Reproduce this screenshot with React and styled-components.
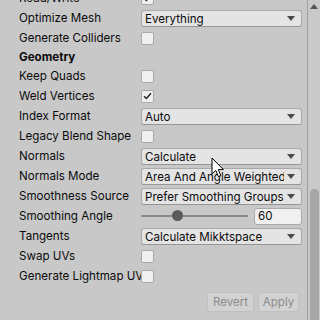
import React from "react";
import styled, { createGlobalStyle } from "styled-components";

const Global = createGlobalStyle`
  html, body { margin: 0; padding: 0; background: #c8c8c8; }
  body { width: 320px; height: 320px; overflow: hidden; font-family: Inter, "Noto Sans", sans-serif; }
`;

const Window = styled.div`
  position: relative;
  width: 320px;
  height: 320px;
  display: flex;
  background: #c8c8c8;
  overflow: hidden;
`;

const Content = styled.div`
  flex: 1;
  display: flex;
  flex-direction: column;
  padding: 0 5px 0 19px;
  margin-top: -12px;
`;

const Row = styled.div`
  display: grid;
  grid-template-columns: 122px 1fr;
  align-items: center;
  height: ${(p) => (p.$header ? 18 : 20)}px;
`;

const Label = styled.div`
  font-size: 11.6px;
  color: #0b0b0b;
  white-space: nowrap;
  overflow: hidden;
  font-weight: ${(p) => (p.$bold ? 700 : 400)};
  line-height: 20px;
`;

const Header = styled(Label)`
  grid-column: 1 / 3;
  line-height: 18px;
`;

const Dropdown = styled.div`
  height: 17px;
  margin-top: 1px;
  box-sizing: border-box;
  border: 1px solid #a9a9a9;
  border-bottom-color: #959595;
  border-radius: 3px;
  background: #e4e4e4;
  display: flex;
  align-items: center;
  padding: 0 6px 0 3px;
  font-size: 11.6px;
  color: #0b0b0b;
  white-space: nowrap;
  overflow: hidden;
`;

const DropText = styled.span`
  flex: 1;
  overflow: hidden;
`;

const Arrow = styled.span`
  flex: none;
  width: 0;
  height: 0;
  border-left: 4px solid transparent;
  border-right: 4px solid transparent;
  border-top: 5px solid #4a4a4a;
  margin-left: 3px;
`;

const Check = styled.div`
  width: 13px;
  height: 13px;
  box-sizing: border-box;
  border: 1px solid #a9a9a9;
  border-radius: 2px;
  background: #f0f0f0;
  display: flex;
  align-items: center;
  justify-content: center;
`;

const SliderWrap = styled.div`
  display: flex;
  align-items: center;
  gap: 6px;
`;

const Track = styled.div`
  position: relative;
  width: 107px;
  height: 2px;
  background: #8a8a8a;
`;

const Knob = styled.div`
  position: absolute;
  left: 31px;
  top: -5px;
  width: 11px;
  height: 11px;
  border-radius: 50%;
  background: #5a5a5a;
`;

const NumberField = styled.div`
  width: 48px;
  height: 17px;
  margin-top: 1px;
  box-sizing: border-box;
  border: 1px solid #a9a9a9;
  border-radius: 3px;
  background: #f0f0f0;
  font-size: 11.6px;
  color: #0b0b0b;
  padding-left: 3px;
  line-height: 15px;
`;

const Buttons = styled.div`
  display: flex;
  justify-content: flex-end;
  gap: 4px;
  margin-top: 6px;
  padding-right: 3px;
`;

const Button = styled.div`
  height: 20px;
  box-sizing: border-box;
  border: 1px solid #c0c0c0;
  border-radius: 3px;
  background: #d2d2d2;
  color: #8c8c8c;
  font-size: 11.6px;
  padding: 0 5px;
  display: flex;
  align-items: center;
  width: ${(p) => p.$w}px;
  justify-content: center;
`;

const Scrollbar = styled.div`
  width: 13px;
  border-left: 1px solid #9f9f9f;
  box-sizing: border-box;
  background: #c9c9c9;
  display: flex;
  flex-direction: column;
  align-items: center;
`;

const UpArrow = styled.div`
  margin-top: 4px;
  width: 0;
  height: 0;
  border-left: 4px solid transparent;
  border-right: 4px solid transparent;
  border-bottom: 5px solid #555;
`;

const Thumb = styled.div`
  margin-top: 180px;
  width: 9px;
  flex: 1;
  border-radius: 5px 5px 0 0;
  background: #a6a6a6;
  margin-left: 1px;
`;

const Cursor = styled.svg`
  position: absolute;
  left: 211px;
  top: 157px;
`;

const Tick = () => (
  <svg width="9" height="8" viewBox="0 0 9 8">
    <path d="M1 4.2 L3.4 6.5 L8 1.2" fill="none" stroke="#222" strokeWidth="1.4" />
  </svg>
);

const Select = ({ value }) => (
  <Dropdown>
    <DropText>{value}</DropText>
    <Arrow />
  </Dropdown>
);

const rows = [
  ["Read/Write", "check", true],
  ["Optimize Mesh", "select", "Everything"],
  ["Generate Colliders", "check", false],
  ["Geometry", "header"],
  ["Keep Quads", "check", false],
  ["Weld Vertices", "check", true],
  ["Index Format", "select", "Auto"],
  ["Legacy Blend Shape", "check", false],
  ["Normals", "select", "Calculate"],
  ["Normals Mode", "select", "Area And Angle Weighted"],
  ["Smoothness Source", "select", "Prefer Smoothing Groups"],
  ["Smoothing Angle", "slider", "60"],
  ["Tangents", "select", "Calculate Mikktspace"],
  ["Swap UVs", "check", false],
  ["Generate Lightmap UVs", "check", false],
];

export default function App() {
  return (
    <Window>
      <Global />
      <Content>
        {rows.map(([label, kind, value]) => (
          <Row key={label} $header={kind === "header"}>
            {kind === "header" ? (
              <Header $bold>{label}</Header>
            ) : (
              <>
                <Label>{label}</Label>
                {kind === "check" && <Check>{value && <Tick />}</Check>}
                {kind === "select" && <Select value={value} />}
                {kind === "slider" && (
                  <SliderWrap>
                    <Track>
                      <Knob />
                    </Track>
                    <NumberField>{value}</NumberField>
                  </SliderWrap>
                )}
              </>
            )}
          </Row>
        ))}
        <Buttons>
          <Button $w={47}>Revert</Button>
          <Button $w={41}>Apply</Button>
        </Buttons>
      </Content>
      <Scrollbar>
        <UpArrow />
        <Thumb />
      </Scrollbar>
      <Cursor width="14" height="22" viewBox="0 0 14 22">
        <path
          d="M1 1 L1 17 L4.8 13.4 L7.4 19.6 L9.8 18.6 L7.3 12.6 L12.4 12.6 Z"
          fill="#fff"
          stroke="#000"
          strokeWidth="1"
          strokeLinejoin="round"
        />
      </Cursor>
    </Window>
  );
}
